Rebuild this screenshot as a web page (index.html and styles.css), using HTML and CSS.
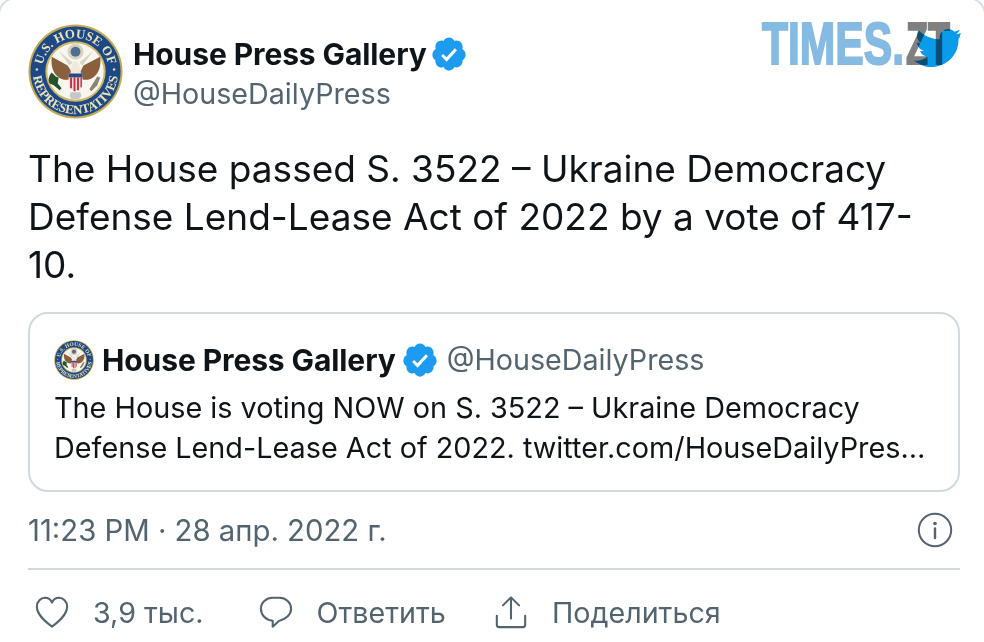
FILE: index.html
```html
<!DOCTYPE html>
<html lang="ru">
<head>
    <meta charset="UTF-8">
    <meta name="viewport" content="width=device-width, initial-scale=1.0">
    <title>House Press Gallery</title>
    <link rel="stylesheet" href="styles.css">
</head>
<body>

<svg class="defs" width="0" height="0">
    <defs>
        <symbol id="seal" viewBox="0 0 96 96">
            <circle cx="48" cy="48" r="47.500" fill="#c4a954"/>
            <circle cx="48" cy="48" r="45.500" fill="#1c4885"/>
            <circle cx="48" cy="48" r="30.500" fill="#d2b765"/>
            <circle cx="48" cy="48" r="28.500" fill="#f8f6ee"/>
            <path id="seal-top" d="M16 59.600A34 34 0 1 1 80 59.600" fill="none"/>
            <path id="seal-bottom" d="M7 35A43 43 0 1 0 89 35" fill="none"/>
            <text class="seal-text"><textPath href="#seal-top" startOffset="50%">U.S. HOUSE OF</textPath></text>
            <text class="seal-text"><textPath href="#seal-bottom" startOffset="50%">REPRESENTATIVES</textPath></text>
            <circle cx="9" cy="46" r="1.300" fill="#e7d9a0"/>
            <circle cx="87" cy="46" r="1.300" fill="#e7d9a0"/>
            <circle cx="48" cy="28" r="8" fill="#d8d3c0"/>
            <circle cx="48" cy="28" r="5" fill="#4f6f92"/>
            <path d="M40 42 24 33c-1 8 1 16 6 20 3 3 8 4 12 3l2-8z" fill="#8a5f3c"/>
            <path d="M56 42l17-9c1 8-1 16-6 20-3 3-8 4-12 3l-2-8z" fill="#8a5f3c"/>
            <path d="M31 27l14 12-3 3zM66 27 52 39l3 3z" fill="#d9d5c8"/>
            <path d="M43 50c0-8 2-12 5-12s5 4 5 12z" fill="#efeadb"/>
            <path d="M41 50h14v12c0 3-4 5-7 6-3-1-7-3-7-6z" fill="#e9e4e4"/>
            <path d="M41 50h14v4H41z" fill="#2c4a83"/>
            <path d="M42.500 54h2v11h-2zM46 54h2v14h-2zM49.500 54h2v13h-2zM53 54h1.500v10H53z" fill="#c8323f"/>
            <path d="M24 49c-3 3-4 8-2 11l4 2 6 5 2-2-4-5 1-6-3-1z" fill="#25542c"/>
            <path d="M62 66l8-13 3 1-3 8-6 6z" fill="#8c8471"/>
            <path d="M43 69h10l1 4-3 3h-7l-2-3z" fill="#c3c8c8"/>
        </symbol>
        <symbol id="badge" viewBox="0 0 24 24">
            <path fill="#1d9bf0" d="M22.500 12.500c0-1.580-.875-2.950-2.148-3.600.154-.435.238-.905.238-1.400 0-2.210-1.710-3.998-3.818-3.998-.47 0-.92.084-1.336.250C14.818 2.415 13.510 1.500 12 1.500s-2.816.917-3.437 2.250c-.415-.165-.866-.25-1.336-.25-2.110 0-3.818 1.790-3.818 4 0 .494.083.964.237 1.400-1.272.650-2.147 2.018-2.147 3.600 0 1.495.782 2.798 1.942 3.486-.02.170-.032.340-.032.514 0 2.210 1.708 4 3.818 4 .47 0 .92-.086 1.335-.250.620 1.334 1.926 2.250 3.437 2.250 1.512 0 2.818-.916 3.437-2.250.415.163.865.248 1.336.248 2.110 0 3.818-1.790 3.818-4 0-.174-.012-.344-.033-.513 1.158-.687 1.943-1.990 1.943-3.484z"/>
            <path fill="#fff" d="M10.540 16.850 6.990 13.300l1.340-1.340 2.120 2.120 5.200-5.660 1.400 1.290z"/>
        </symbol>
    </defs>
</svg>

<div class="tweet">
    <div class="author">
        <svg class="avatar"><use href="#seal"/></svg>
        <div class="author-names">
            <div class="name-row">
                <span class="name">House Press Gallery</span>
                <svg class="badge"><use href="#badge"/></svg>
            </div>
            <div class="handle">@HouseDailyPress</div>
        </div>
    </div>

    <p class="tweet-text">The House passed S. 3522 – Ukraine Democracy Defense Lend-Lease Act of 2022 by a vote of 417-<br>10.</p>

    <div class="quote">
        <div class="quote-head">
            <svg class="quote-avatar"><use href="#seal"/></svg>
            <span class="name">House Press Gallery</span>
            <svg class="badge"><use href="#badge"/></svg>
            <span class="handle">@HouseDailyPress</span>
        </div>
        <p class="quote-text">The House is voting NOW on S. 3522 – Ukraine Democracy Defense Lend-Lease Act of 2022. twitter.com/HouseDailyPres…</p>
    </div>

    <div class="meta">
        <span>11:23 PM · 28 апр. 2022 г.</span>
        <svg class="info" viewBox="0 0 36 36">
            <circle cx="18" cy="18" r="16.200" fill="none" stroke="#536471" stroke-width="2"/>
            <circle cx="18" cy="11.500" r="1.800" fill="#536471"/>
            <path d="M18 16.500V26" stroke="#536471" stroke-width="2.400" stroke-linecap="round"/>
        </svg>
    </div>

    <div class="actions">
        <div class="action like">
            <svg class="action-icon" viewBox="0 0 36 36"><path d="M18 33.500C12 29 2 21.500 2 12.200 2 6.500 6.200 3 10.500 3c3.300 0 6 1.700 7.500 5 1.500-3.300 4.200-5 7.500-5C29.800 3 34 6.500 34 12.200c0 9.300-10 16.800-16 21.300z" fill="none" stroke="#536471" stroke-width="2.200" stroke-linejoin="round"/></svg>
            <span>3,9 тыс.</span>
        </div>
        <div class="action reply">
            <svg class="action-icon" viewBox="0 0 36 36"><path d="M14.500 3h7C28.500 3 34 8 34 14.500S28 26 21 27.500l-6.500 6v-6.200C7 26.500 2 21 2 14.500S7.500 3 14.500 3z" fill="none" stroke="#536471" stroke-width="2.200" stroke-linejoin="round"/></svg>
            <span>Ответить</span>
        </div>
        <div class="action share">
            <svg class="action-icon" viewBox="0 0 36 36"><path d="M18 25V3M9.500 11 18 2.500 26.500 11M3 22v9.500C3 33 4 34 5.500 34h25c1.500 0 2.500-1 2.500-2.500V22" fill="none" stroke="#536471" stroke-width="2.200" stroke-linecap="round" stroke-linejoin="round"/></svg>
            <span>Поделиться</span>
        </div>
    </div>
</div>

<div class="logo">
    <span class="logo-times">TIMES.</span><span class="logo-zt">ZT</span>
    <svg class="logo-bird" viewBox="0 0 48 40"><path fill="#0a9ce8" d="M48 4c-1.800.8-3.200 1-5 1.300 1.900-1.100 3.100-2.700 3.800-4.700-1.800 1-3.500 1.800-5.500 2.100C39.600 1 37.300 0 34.800 0c-4.800 0-8.600 3.900-8.600 8.600 0 .7.100 1.300.200 2C19 10.200 10.400 7.400 4.500 1.200 1.500 6.500 3.500 11.900 7 14.500c-1.400 0-2.800-.4-4-1 0 4.200 3 7.800 7 8.700-1.300.3-2.600.4-3.900.1 1.100 3.400 4.300 5.900 8 6C10.500 31.200 5.500 33 0 32.500 5 35.700 10 39 17 39c17 0 28.500-13 28.500-27.500v-1.200c1-.9 1.800-3.800 2.500-6.300z"/></svg>
</div>

</body>
</html>
```

FILE: styles.css
```css
* {
    box-sizing: border-box;
}
html, body {
    margin: 0;
    padding: 0;
    height: 100%;
    overflow: hidden;
}
body {
    font-family: 'Inter', 'Liberation Sans', sans-serif;
    background-color: #ffffff;
    color: #0f1419;
    position: relative;
}
.defs {
    position: absolute;
}
.seal-text {
    font-family: 'Liberation Serif', serif;
    font-size: 13px;
    font-weight: 700;
    fill: #ece2b8;
    text-anchor: middle;
}
.tweet {
    margin: -3px -2px 0;
    height: 645px;
    padding: 25px 24px 0 28px;
    border: 2px solid #d8e0e5;
    border-bottom: none;
    border-radius: 18px 18px 0 0;
}
.author {
    display: flex;
    align-items: center;
    gap: 10px;
}
.avatar {
    width: 95px;
    height: 95px;
}
.author-names {
    padding-top: 5px;
}
.name-row {
    display: flex;
    align-items: center;
    gap: 3px;
}
.name {
    font-size: 30px;
    line-height: 40px;
    font-weight: 700;
    letter-spacing: -0.1px;
}
.badge {
    width: 38px;
    height: 38px;
    flex-shrink: 0;
}
.handle {
    font-size: 28.700px;
    line-height: 40px;
    color: #536471;
}
.tweet-text {
    margin: 26px 0 0;
    font-size: 37px;
    line-height: 48px;
}
.quote {
    margin-top: 23px;
    height: 180px;
    padding: 26px 25px 0 24px;
    border: 2px solid #cfd9de;
    border-radius: 20px;
}
.quote-head {
    display: flex;
    align-items: center;
    height: 40px;
}
.quote-avatar {
    width: 40px;
    height: 40px;
    margin-right: 8px;
}
.quote-head .badge {
    margin: 0 8px 0 5px;
}
.quote-text {
    margin: 8px 0 0;
    font-size: 28.800px;
    line-height: 40px;
}
.meta {
    display: flex;
    justify-content: space-between;
    align-items: center;
    height: 78px;
    border-bottom: 2px solid #cfd9de;
    padding-right: 7px;
    font-size: 29.300px;
    color: #536471;
}
.info {
    width: 36px;
    height: 36px;
}
.actions {
    display: flex;
    align-items: center;
    height: 72px;
    padding-top: 12px;
    font-size: 28.700px;
    color: #536471;
}
.action {
    display: flex;
    align-items: center;
}
.action-icon {
    width: 34px;
    height: 34px;
    margin-right: 24px;
}
.like {
    margin-left: 7px;
    margin-right: 55px;
}
.reply {
    margin-right: 48px;
}
.logo {
    position: absolute;
    top: 9px;
    left: 762px;
    display: flex;
    font-family: 'Liberation Sans', sans-serif;
    font-size: 60px;
    line-height: 70px;
    font-weight: 700;
    -webkit-text-stroke: 2px currentColor;
}
.logo-times {
    color: #85bae3;
    display: inline-block;
    width: 144px;
    transform: scaleX(0.71);
    transform-origin: left;
}
.logo-zt {
    color: #808080;
    display: inline-block;
    transform: scaleX(0.6);
    transform-origin: left;
}
.logo-bird {
    position: absolute;
    left: 152px;
    top: 20px;
    width: 47px;
    height: 39px;
    mix-blend-mode: multiply;
}
```
